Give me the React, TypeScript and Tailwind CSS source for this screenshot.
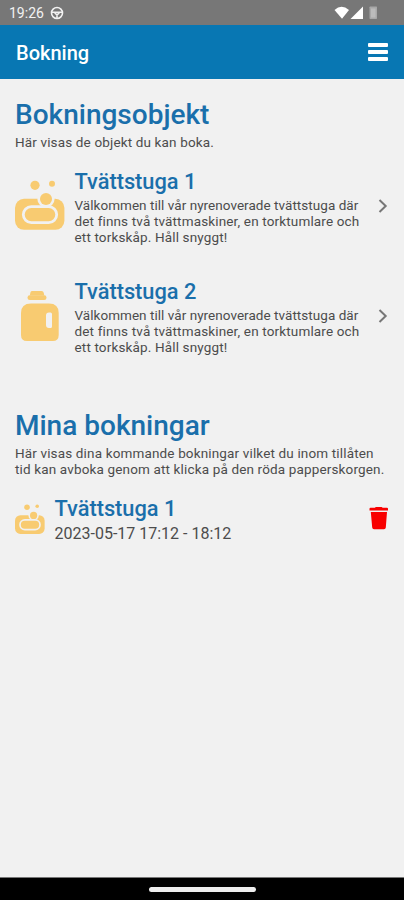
import React from "react";

const Soap = ({ className }: { className: string }) => (
  <svg viewBox="0 0 50 50" className={className} fill="#f8cb71">
    <circle cx="20" cy="5.3" r="4.6" />
    <circle cx="37" cy="3.8" r="3" />
    <rect x="0" y="18.8" width="49.4" height="31" rx="9" />
    <circle cx="31" cy="19" r="8.6" fill="#f1f1f1" />
    <rect x="8.3" y="26.6" width="33.4" height="16" rx="8" stroke="#f1f1f1" strokeWidth="2.8" />
    <circle cx="31" cy="19" r="6" />
  </svg>
);

const Bottle = () => (
  <svg viewBox="0 0 38 50" className="mt-px h-[50px] w-[38px]" fill="#f8cb71">
    <path d="M11 0h9.500q2 0 2.300 2l.5 2.500h-14.500L9.300 2Q9.500 0 11 0Z" />
    <rect x="6.500" y="4.300" width="19" height="4.700" rx="2.300" />
    <path fillRule="evenodd" d="M10 12.500H28Q37.700 12.500 37.700 22V44Q37.700 50 31.700 50H6Q0 50 0 44V22Q0 12.500 10 12.500ZM28 21.500a3 3 0 0 0-3 3V34q0 3 3 3h1.500q1.500 0 1.500-1.500V23q0-1.500-1.500-1.500Z" />
  </svg>
);

const Chevron = () => (
  <svg viewBox="0 0 10 14" className="h-[14px] w-[10px] shrink-0" fill="none" stroke="#777" strokeWidth="2">
    <path d="M1.500 1 7.700 7 1.500 13" />
  </svg>
);

const Wheel = () => (
  <svg viewBox="0 0 14 14" className="ml-[6px] h-[14px] w-[14px]" fill="none" stroke="#f2f2f2" strokeWidth="1.600">
    <circle cx="7" cy="7" r="5.500" />
    <path d="M1.500 6.300h11M4.500 6.500 7 9 9.500 6.500M7 8.500v4.500" />
  </svg>
);

const Room = ({ title, icon }: { title: string; icon: React.ReactNode }) => (
  <article className="flex h-[110px] items-start">
    <div className="flex w-[50px] shrink-0 justify-center pt-[12px]">{icon}</div>
    <div className="ml-[9.500px] w-[290px] shrink-0">
      <h2 className="text-[21.800px] leading-[27px] font-medium whitespace-nowrap text-[#1a6fab]">{title}</h2>
      <p className="mt-[2px] text-[13.500px] leading-4 tracking-[0.15px] whitespace-nowrap text-[#4c4c4c]">
        <span className="tracking-[0.04px]">Välkommen till vår nyrenoverade tvättstuga där</span>
        <br />
        det finns två tvättmaskiner, en torktumlare och
        <br />
        ett torkskåp. Håll snyggt!
      </p>
    </div>
    <div className="ml-[13px] pt-[31px]">
      <Chevron />
    </div>
  </article>
);

export default function App() {
  return (
    <div className="flex h-[900px] w-[404px] flex-col overflow-hidden bg-[#f1f1f1] font-['Roboto',sans-serif]">
      <div className="flex h-[25px] shrink-0 items-center bg-[#777] pl-[9px] text-[14px] text-[#f2f2f2]">
        <span className="pt-px">19:26</span>
        <Wheel />
        <svg viewBox="0 0 44 14" className="mr-[26px] ml-auto h-[14px] w-[44px]" fill="#fff">
          <path d="M.5 4Q7.500-2.500 15 4L8 12.800Z" />
          <path d="M29 .5V13H16.500Z" />
          <rect x="35.500" y=".500" width="7.500" height="12.500" rx=".7" fill="#a8a8a8" />
          <rect x="37" y="2.500" width="4.500" height="9" fill="#bbb" />
        </svg>
      </div>
      <header className="flex h-[54px] shrink-0 items-center justify-between bg-[#0877b3] pr-[16px] pl-[16px]">
        <h1 className="pt-px text-[20px] font-medium text-white">Bokning</h1>
        <div className="flex w-5 flex-col gap-[3px]">
          <div className="h-1 rounded-[1px] bg-white" />
          <div className="h-1 rounded-[1px] bg-white" />
          <div className="h-1 rounded-[1px] bg-white" />
        </div>
      </header>
      <main className="flex-1 pt-[20px] pl-[15px]">
        <h2 className="text-[28px] leading-8 font-medium text-[#1a6fab]">Bokningsobjekt</h2>
        <p className="mt-[3px] text-[13.500px] leading-4 tracking-[0.15px] text-[#4c4c4c]">Här visas de objekt du kan boka.</p>
        <div className="mt-[18px]">
          <Room title="Tvättstuga 1" icon={<Soap className="h-[50px] w-[50px]" />} />
          <Room title="Tvättstuga 2" icon={<Bottle />} />
        </div>
        <h2 className="mt-[22px] text-[28px] leading-8 font-medium text-[#1a6fab]">Mina bokningar</h2>
        <p className="mt-[3px] text-[13.500px] leading-4 tracking-[0.15px] whitespace-nowrap text-[#4c4c4c]">
          Här visas dina kommande bokningar vilket du inom tillåten
          <br />
          tid kan avboka genom att klicka på den röda papperskorgen.
        </p>
        <div className="mt-[18px] flex items-start">
          <Soap className="mt-[9px] h-[30px] w-[30px] shrink-0" />
          <div className="ml-[9.500px]">
            <h3 className="text-[21.800px] leading-[27px] font-medium text-[#1a6fab]">Tvättstuga 1</h3>
            <p className="text-[16px] leading-6 text-[#4c4c4c]">2023-05-17 17:12 - 18:12</p>
          </div>
          <svg viewBox="0 0 20 23" className="mt-[12px] mr-[15px] ml-auto h-[23px] w-5" fill="#f80000">
            <path d="M6 .8Q6.200 0 7 0h5.500q.8 0 1 .8h4.500q1 0 1 1v1.600H.5V1.800q0-1 1-1ZM1.800 5h16.200l-1.200 15.600q-.2 1.700-1.800 1.700H5q-1.600 0-1.800-1.700Z" />
          </svg>
        </div>
      </main>
      <footer className="flex h-[23px] shrink-0 items-center justify-center border-t border-[#777] bg-black">
        <div className="h-[5px] w-[107px] rounded-full bg-[#eee]" />
      </footer>
    </div>
  );
}
